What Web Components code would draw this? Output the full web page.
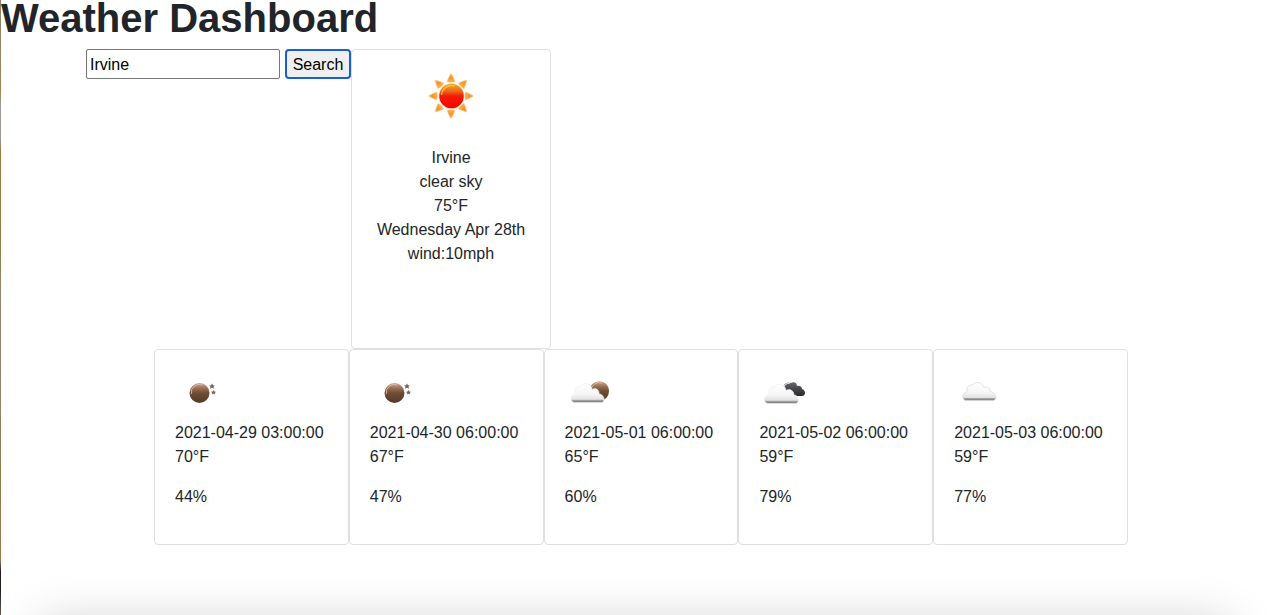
<!DOCTYPE html>
<html lang="en">
<head>
<meta charset="utf-8">
<meta name="viewport" content="width=device-width, initial-scale=1">
<title>Weather Dashboard</title>
<style>
  body {
    margin: 0;
    min-height: 100vh;
    background: #fff;
    color: #212529;
    font: 16px/24px "Liberation Sans", Arial, sans-serif;
  }
</style>
</head>
<body>
<weather-app></weather-app>

<template id="app-template">
  <style>
    :host {
      display: block;
      box-sizing: border-box;
      min-height: 100vh;
      padding-left: 1px;
      background: linear-gradient(#8f8068 0, #98845f 70px, #a38452 90px, #9f9a95 105px, #9f9690 140px, #9c7a45 150px, #97794a 240px, #948568 290px, #938366 400px, #94784f 480px, #9b7b54 560px, #1c1b25 572px, #1f1d26 590px, #544641 608px, #665650 615px) left top / 1px 615px no-repeat;
    }
    h1 { margin: 0 0 12px; font-size: 40px; line-height: 37px; font-weight: 700; }
    .top { display: flex; align-items: flex-start; margin-left: 85px; }
    .forecast { display: grid; grid-template-columns: repeat(5, 1fr); margin: 0 141px 0 153px; }
  </style>
  <h1>Weather Dashboard</h1>
  <div class="top">
    <city-search></city-search>
    <current-weather icon="sun">
      <span slot="city">Irvine</span>
      <span slot="sky">clear sky</span>
      <span slot="temp">75°F</span>
      <span slot="date">Wednesday Apr 28th</span>
      <span slot="wind">wind:10mph</span>
    </current-weather>
  </div>
  <div class="forecast">
    <forecast-card icon="moon"><span slot="date">2021-04-29 03:00:00</span><span slot="temp">70°F</span><span slot="humidity">44%</span></forecast-card>
    <forecast-card icon="moon"><span slot="date">2021-04-30 06:00:00</span><span slot="temp">67°F</span><span slot="humidity">47%</span></forecast-card>
    <forecast-card icon="cloud-moon"><span slot="date">2021-05-01 06:00:00</span><span slot="temp">65°F</span><span slot="humidity">60%</span></forecast-card>
    <forecast-card icon="broken"><span slot="date">2021-05-02 06:00:00</span><span slot="temp">59°F</span><span slot="humidity">79%</span></forecast-card>
    <forecast-card icon="cloud"><span slot="date">2021-05-03 06:00:00</span><span slot="temp">59°F</span><span slot="humidity">77%</span></forecast-card>
  </div>
  <bottom-shade></bottom-shade>
</template>

<template id="search-template">
  <style>
    :host { display: block; }
    form { display: flex; gap: 5px; }
    input, button { box-sizing: border-box; height: 30px; margin: 0; font: inherit; color: #000; }
    input { width: 194px; padding: 2px 3px 0; border: 1px solid #767676; border-radius: 2px; background: #fff; }
    button { width: 66px; padding: 2px 0 0; border: 2px solid #1a5fcc; border-radius: 4px; background: #efefef; white-space: nowrap; }
    input:focus, button:focus { outline: none; }
  </style>
  <form>
    <input type="text" value="Irvine" aria-label="City">
    <button type="button">Search</button>
  </form>
</template>

<template id="current-template">
  <style>
    :host {
      display: flex;
      flex-direction: column;
      align-items: center;
      box-sizing: border-box;
      width: 200px;
      min-height: 300px;
      padding: 21px 20px;
      border: 1px solid #dfdfdf;
      border-radius: 4px;
      text-align: center;
      white-space: nowrap;
    }
    weather-icon { margin-bottom: 25px; }
  </style>
  <weather-icon></weather-icon>
  <div><slot name="city"></slot></div>
  <div><slot name="sky"></slot></div>
  <div><slot name="temp"></slot></div>
  <div><slot name="date"></slot></div>
  <div><slot name="wind"></slot></div>
</template>

<template id="forecast-template">
  <style>
    :host {
      display: block;
      box-sizing: border-box;
      min-width: 0;
      padding: 20px 20px 19px;
      border: 1px solid #dfdfdf;
      border-radius: 4px;
      white-space: nowrap;
    }
    weather-icon { margin-bottom: 1px; }
    p { margin: 16px 0; }
  </style>
  <weather-icon></weather-icon>
  <div><slot name="date"></slot></div>
  <div><slot name="temp"></slot></div>
  <p><slot name="humidity"></slot></p>
</template>

<template id="shade-template">
  <style>
    :host { display: block; position: fixed; inset: auto 0 0 1px; height: 60px; overflow: hidden; pointer-events: none; }
    div { margin: 68px 40px 0; height: 60px; box-shadow: 0 0 50px rgba(0, 0, 0, .2); }
  </style>
  <div></div>
</template>

<script>
const DEFS = `
  <defs>
    <linearGradient id="sun" x1="0" y1="0" x2="0" y2="1"><stop offset="0" stop-color="#f5ab26"/><stop offset=".3" stop-color="#ed6a18"/><stop offset=".5" stop-color="#f31a06"/><stop offset="1" stop-color="#f00"/></linearGradient>
    <radialGradient id="ray" gradientUnits="userSpaceOnUse" cx="25" cy="25" r="23"><stop offset=".6" stop-color="#f8b54d"/><stop offset=".8" stop-color="#f4932c"/><stop offset="1" stop-color="#f9b862"/></radialGradient>
    <linearGradient id="moon" x1="0" y1="0" x2="0" y2="1"><stop offset="0" stop-color="#cba690"/><stop offset=".3" stop-color="#94694f"/><stop offset=".5" stop-color="#6f4c36"/><stop offset="1" stop-color="#573927"/></linearGradient>
    <linearGradient id="cloud" x1="0" y1="0" x2="0" y2="1"><stop offset="0" stop-color="#fefefe"/><stop offset=".55" stop-color="#f6f6f6"/><stop offset=".83" stop-color="#e3e3e3"/><stop offset=".9" stop-color="#999"/><stop offset="1" stop-color="#777"/></linearGradient>
    <linearGradient id="dark" x1="0" y1="0" x2="0" y2="1"><stop offset="0" stop-color="#66666a"/><stop offset=".55" stop-color="#444447"/><stop offset="1" stop-color="#29292c"/></linearGradient>
  </defs>`;
const rays = Array.from({ length: 8 }, (_, i) =>
  `<path d="M21 10.5 Q25 12.5 29 10.5 L25.6 3 L24.4 3 Z" transform="rotate(${i * 45} 25 25)"/>`).join('');
const moonDisc = (x, y, r) => `
  <circle cx="${x}" cy="${y}" r="${r}" fill="url(#moon)"/>
  <path d="M${x - r + 2} ${y + 1} A${r - 2} ${r - 2} 0 0 1 ${x + 3} ${y - r + 2}" fill="none" stroke="#e3c5b6" stroke-width="1" opacity=".8"/>`;
const ICONS = {
  sun: `<g fill="url(#ray)" stroke="#fbc987" stroke-width=".6">${rays}</g>
    <circle cx="25.5" cy="25" r="13.5" fill="#fff0dc"/><circle cx="25.5" cy="25" r="12.3" fill="url(#sun)"/>
    <path d="M15.5 24 A10 10 0 0 1 28.5 15" fill="none" stroke="#fad154" stroke-width="1.5" opacity=".7"/>`,
  moon: `${moonDisc(24.5, 23, 10)}
    <g fill="#806455"><path d="M37 13.5 L38 15.3 L40 15.4 L38.5 16.8 L39 18.7 L37 17.7 L35 18.7 L35.5 16.8 L34 15.4 L36 15.3 Z"/>
    <path d="M38.5 20 L39.3 21.5 L41 21.7 L39.8 22.9 L40 24.6 L38.5 23.8 L37 24.6 L37.2 22.9 L36 21.7 L37.7 21.5 Z"/></g>`,
  'cloud-moon': `${moonDisc(34.3, 21, 9.8)}
    <path d="M9 32.5 C5 31.5 5 25 10 24 C9.5 18 12 16 15.5 16.3 C18 12 26.5 12.5 27 19.5 C31 17 34.5 20 34 24 C39 24 41 31.5 37 32.5 Z" fill="url(#cloud)" stroke="#ececec" stroke-width=".6"/>`,
  broken: `<path d="M24 20 C23 15 28 11 32 13 C35 11 38 13 38 16 C41 15 43 17 43 19 C47 20 47 26 43 26 L32 26 C29 25 28 20 24 20 Z" fill="url(#dark)"/>
    <path d="M24 18.5 Q26 13 31 13" fill="none" stroke="#fff" stroke-width="1"/>
    <path d="M9 33.5 C4 32.5 4 26 9.5 25 C8.5 19 11.5 16.5 15.5 16.5 C18.5 12.5 26.5 14 27 20.5 C31 18 35 21 35 25 C40 25 41 32.5 37 33.5 Z" fill="url(#cloud)" stroke="#f0f0f0" stroke-width=".6"/>`,
  cloud: `<path d="M12 30.5 C7.500 29.500 7.500 23 13 22 C12 17 15.500 14.500 18.500 15 C21 11 29 12 30 17.500 C33.500 15.500 36.500 18.500 36 21.500 C42 22 44 29.500 39.500 30.500 Z" fill="url(#cloud)" stroke="#d9d9d9" stroke-width=".7"/>`
};

customElements.define('weather-icon', class extends HTMLElement {
  static observedAttributes = ['name'];
  constructor() { super(); this.attachShadow({ mode: 'open' }); }
  attributeChangedCallback() {
    this.shadowRoot.innerHTML = `<style>:host{display:block;width:50px;height:50px}svg{display:block}</style>
      <svg width="50" height="50" viewBox="0 0 50 50" aria-hidden="true">${DEFS}${ICONS[this.getAttribute('name')] || ''}</svg>`;
  }
});

function define(name, templateId) {
  customElements.define(name, class extends HTMLElement {
    constructor() {
      super();
      this.attachShadow({ mode: 'open' })
        .append(document.getElementById(templateId).content.cloneNode(true));
    }
    connectedCallback() {
      const icon = this.shadowRoot.querySelector('weather-icon');
      if (icon) icon.setAttribute('name', this.getAttribute('icon'));
    }
  });
}
define('city-search', 'search-template');
define('current-weather', 'current-template');
define('forecast-card', 'forecast-template');
define('bottom-shade', 'shade-template');
define('weather-app', 'app-template');
</script>
</body>
</html>
